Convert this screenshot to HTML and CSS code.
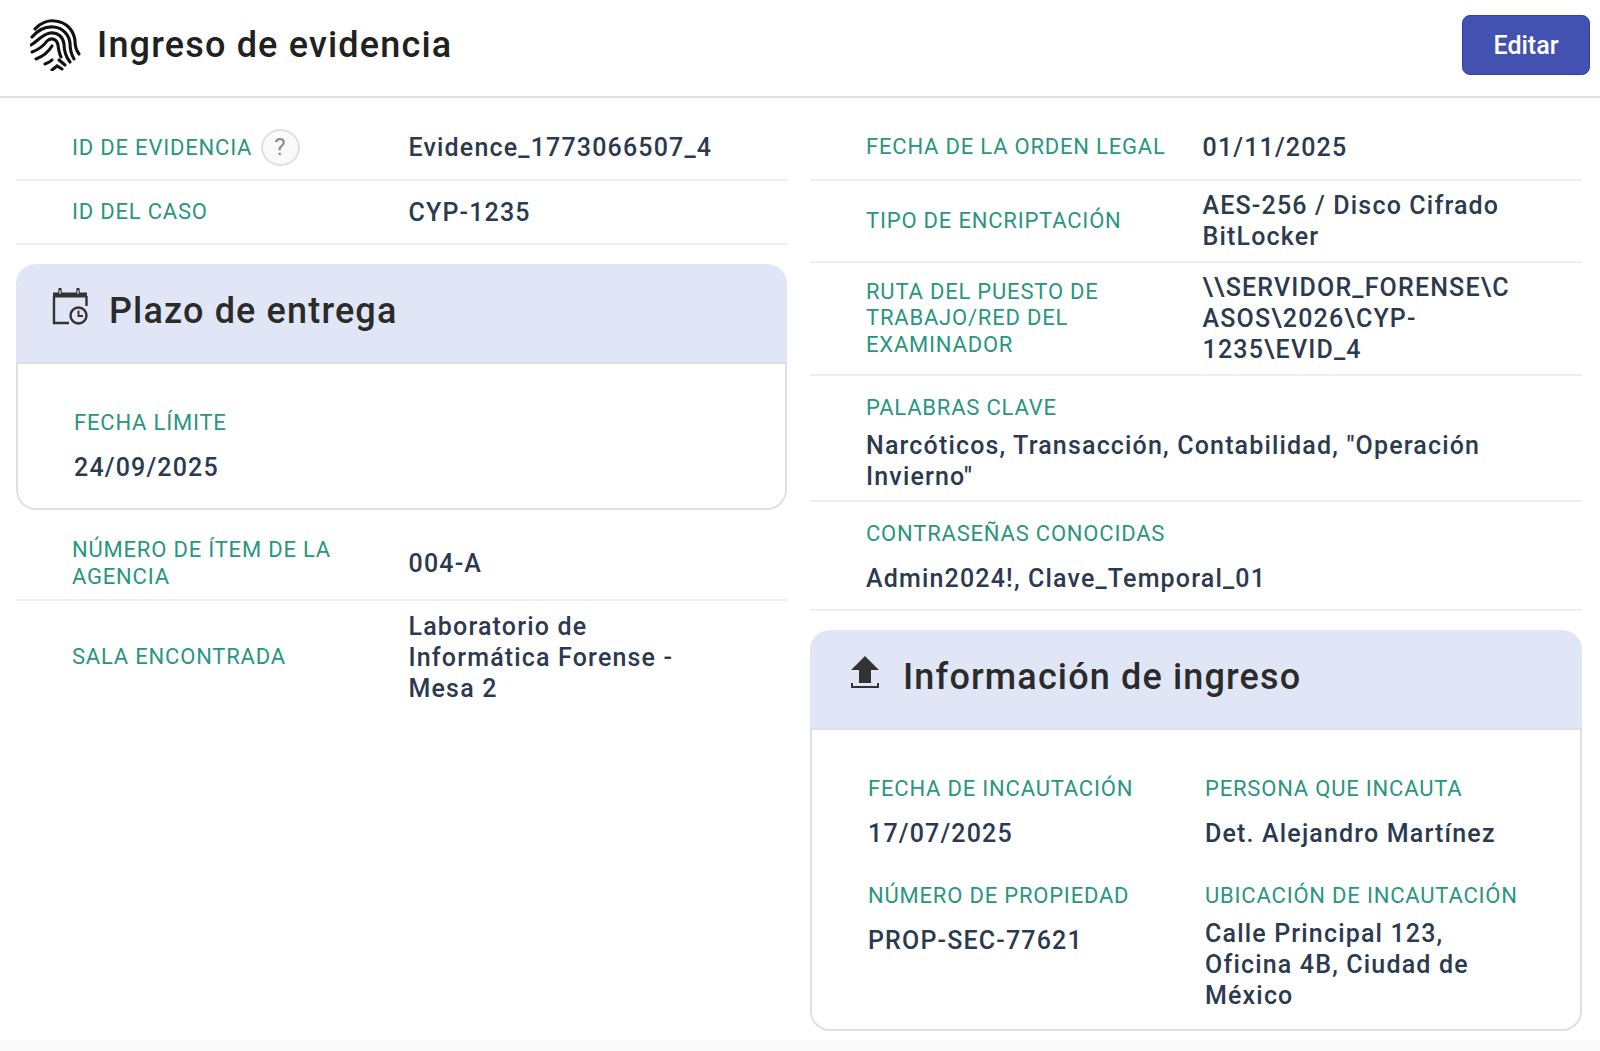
FILE: index.html
```html
<!DOCTYPE html>
<html lang="es">
<head>
    <meta charset="UTF-8">
    <title>Ingreso de evidencia</title>
    <link rel="stylesheet" href="styles.css">
</head>
<body>
    <div class="page">
        <header class="topbar">
            <div class="topbar-title">
                <svg class="fp-icon" viewBox="6 6 52 52" fill="none" stroke="#111" stroke-width="3.1" stroke-linecap="round">
                    <path d="M11 16C16 10 24 7 31 8c12 1 19 10 20 20 0 5 1 9 4 13"/>
                    <path d="M8 24c6-7 13-11 22-10 9 1 15 8 16 16 0 6 1 11 4 16"/>
                    <path d="M7 32c7-4 10-10 19-12 8-1 13 4 14 11 0 7 2 13 6 18"/>
                    <path d="M8 39c8-3 13-8 15-11 4-4 10-2 11 4 .6 5 1 8 3 12"/>
                    <path d="M12 46c8-3 13-8 16-13"/>
                    <path d="M35 47l6 5"/>
                    <path d="M21 51c3-1 5-2 7-4"/>
                    <path d="M28 57l5-4 5 3"/>
                </svg>
                <h1>Ingreso de evidencia</h1>
            </div>
            <button class="btn-edit">Editar</button>
        </header>

        <main class="columns">
            <section class="col">
                <div class="row row-first">
                    <div class="label">ID DE EVIDENCIA <span class="help">?</span></div>
                    <div class="value">Evidence_1773066507_4</div>
                </div>
                <div class="row">
                    <div class="label">ID DEL CASO</div>
                    <div class="value">CYP-1235</div>
                </div>

                <div class="card">
                    <div class="card-head">
                        <svg class="card-icon" viewBox="0 0 38 38" fill="none" stroke="#333" stroke-width="2.4">
                            <path d="M1 4.5h34v5H1z" fill="#333" stroke="none"/>
                            <path d="M8 1.5v5M26 1.5v5" stroke-linecap="round" stroke-width="3.4"/>
                            <path d="M8 2.5v3M26 2.5v3" stroke-linecap="round" stroke-width="1.2" stroke="#e1e6f7"/>
                            <path d="M2 8v27h15"/>
                            <path d="M34.5 8v10"/>
                            <circle cx="26.5" cy="27.5" r="8"/>
                            <path d="M26.5 22.5v5.5h4.5" stroke-width="1.9"/>
                        </svg>
                        <h2>Plazo de entrega</h2>
                    </div>
                    <div class="card-body">
                        <div class="field">
                            <div class="label">FECHA LÍMITE</div>
                            <div class="value">24/09/2025</div>
                        </div>
                    </div>
                </div>

                <div class="row row-agency">
                    <div class="label">NÚMERO DE ÍTEM DE LA AGENCIA</div>
                    <div class="value">004-A</div>
                </div>
                <div class="row row-last">
                    <div class="label">SALA ENCONTRADA</div>
                    <div class="value">Laboratorio de Informática Forense - Mesa 2</div>
                </div>
            </section>

            <section class="col">
                <div class="row row-first">
                    <div class="label">FECHA DE LA ORDEN LEGAL</div>
                    <div class="value">01/11/2025</div>
                </div>
                <div class="row">
                    <div class="label">TIPO DE ENCRIPTACIÓN</div>
                    <div class="value">AES-256 / Disco Cifrado BitLocker</div>
                </div>
                <div class="row">
                    <div class="label">RUTA DEL PUESTO DE TRABAJO/RED DEL EXAMINADOR</div>
                    <div class="value">\\SERVIDOR_FORENSE\CASOS\2026\CYP-1235\EVID_4</div>
                </div>
                <div class="stack">
                    <div class="label">PALABRAS CLAVE</div>
                    <div class="value">Narcóticos, Transacción, Contabilidad, "Operación Invierno"</div>
                </div>
                <div class="stack">
                    <div class="label">CONTRASEÑAS CONOCIDAS</div>
                    <div class="value">Admin2024!, Clave_Temporal_01</div>
                </div>

                <div class="card">
                    <div class="card-head">
                        <svg class="card-icon" viewBox="0 0 38 38" fill="#333">
                            <path d="M19 2L33 16H25V29H13V16H5Z"/>
                            <path d="M5 29v5h28v-5h-2v3H7v-3z"/>
                        </svg>
                        <h2>Información de ingreso</h2>
                    </div>
                    <div class="card-body card-grid">
                        <div class="field">
                            <div class="label">FECHA DE INCAUTACIÓN</div>
                            <div class="value">17/07/2025</div>
                        </div>
                        <div class="field">
                            <div class="label">PERSONA QUE INCAUTA</div>
                            <div class="value">Det. Alejandro Martínez</div>
                        </div>
                        <div class="field">
                            <div class="label">NÚMERO DE PROPIEDAD</div>
                            <div class="value">PROP-SEC-77621</div>
                        </div>
                        <div class="field">
                            <div class="label">UBICACIÓN DE INCAUTACIÓN</div>
                            <div class="value">Calle Principal 123, Oficina 4B, Ciudad de México</div>
                        </div>
                    </div>
                </div>
            </section>
        </main>
    </div>
</body>
</html>
```

FILE: styles.css
```css
* {
    box-sizing: border-box;
}

body {
    margin: 0;
    background-color: #fafafa;
    font-family: Roboto, "Liberation Sans", sans-serif;
}

.page {
    background-color: #fff;
    height: 1040px;
}

.topbar {
    display: flex;
    justify-content: space-between;
    align-items: center;
    height: 98px;
    padding: 0 10px 6px 30px;
    border-bottom: 2px solid #e0e0e0;
}

.topbar-title {
    display: flex;
    align-items: center;
    gap: 15px;
}

.fp-icon {
    width: 52px;
    height: 52px;
}

h1 {
    margin: 0;
    font-size: 36px;
    font-weight: 500;
    letter-spacing: 1.18px;
    color: #212121;
}

.btn-edit {
    width: 128px;
    height: 60px;
    border: 1px solid #2f40a8;
    border-radius: 8px;
    background-color: #4352b0;
    color: #fff;
    font-family: inherit;
    font-size: 25px;
    font-weight: 500;
}

.columns {
    display: grid;
    grid-template-columns: 771px 772px;
    column-gap: 23px;
    padding: 18px 18px 0 16px;
    align-items: start;
}

.label {
    font-size: 22px;
    line-height: 26.5px;
    letter-spacing: 0.8px;
    color: #2a9580;
}

.value {
    font-size: 25px;
    line-height: 31px;
    font-weight: 500;
    letter-spacing: 1.17px;
    color: #2c3a50;
    overflow-wrap: anywhere;
}

.row {
    display: grid;
    grid-template-columns: 336.5px 1fr;
    align-items: center;
    min-height: 64px;
    padding: 9px 60px 9px 56px;
    border-bottom: 2px solid #eeeeee;
}

.row-first {
    min-height: 65px;
}

.row-agency {
    margin-top: 18px;
    min-height: 73px;
}

.row-last {
    padding-top: 10px;
    border-bottom: 0;
}

.help {
    display: inline-flex;
    justify-content: center;
    align-items: center;
    width: 39px;
    height: 37px;
    margin-left: 2px;
    border: 2px solid #e0e0e0;
    border-radius: 50%;
    background-color: #fafafa;
    color: #888;
    font-size: 24px;
    letter-spacing: 0;
}

.stack {
    padding: 19px 60px 8px 56px;
    border-bottom: 2px solid #eeeeee;
}

.stack .label,
.field .label {
    margin-bottom: 8.5px;
}

.stack .value,
.field .value {
    display: flex;
    align-items: center;
    min-height: 45px;
}

.card {
    margin-top: 19px;
}

.card-head {
    display: flex;
    align-items: center;
    gap: 19px;
    height: 100px;
    padding: 0 36px 4px;
    background-color: #e1e6f7;
    border-bottom: 2px solid #dcdfe8;
    border-radius: 20px 20px 0 0;
}

.card-icon {
    width: 38px;
    height: 38px;
    margin-top: -8px;
}

h2 {
    margin: 0;
    font-size: 36px;
    font-weight: 500;
    letter-spacing: 1.15px;
    color: #2b2b2b;
}

.card-body {
    padding: 46px 56px 18px;
    border: 2px solid #e0e0e0;
    border-top: 0;
    border-radius: 0 0 20px 20px;
}

.card-grid {
    display: grid;
    grid-template-columns: 337px 1fr;
    row-gap: 26.5px;
}
```
